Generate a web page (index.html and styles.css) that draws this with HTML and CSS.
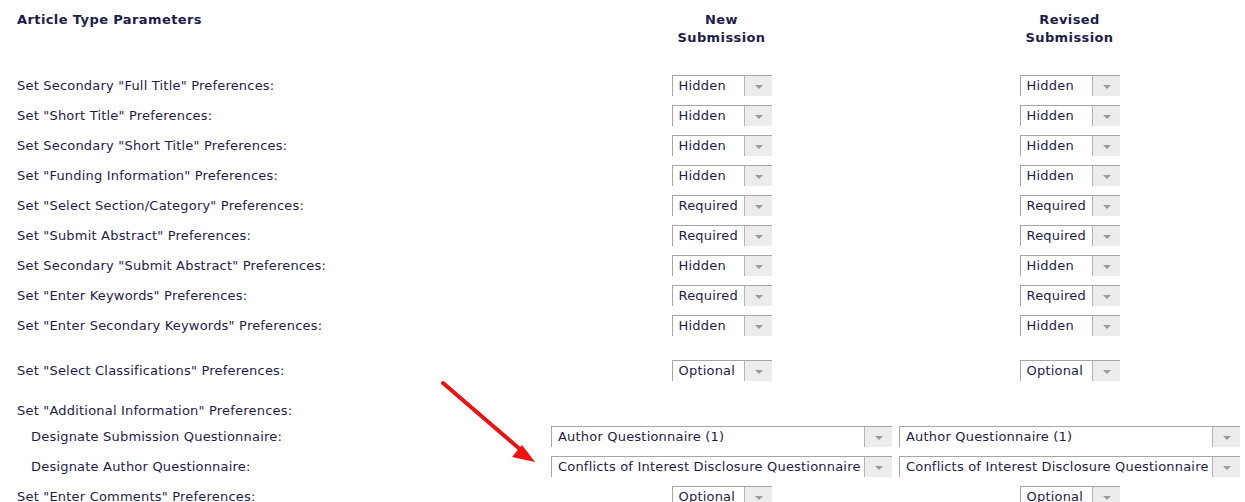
FILE: index.html
```html
<!DOCTYPE html>
<html>
<head>
<meta charset="utf-8">
<link rel="stylesheet" href="styles.css">
</head>
<body>
<div class="page">
  <div class="head">
    <div class="title">Article Type Parameters</div>
    <div class="colhead">New<br>Submission</div>
    <div class="colhead">Revised<br>Submission</div>
  </div>

  <div class="row">
    <div class="label">Set Secondary "Full Title" Preferences:</div>
    <div class="cell"><div class="sel"><span class="val">Hidden</span><span class="btn"></span></div></div>
    <div class="cell"><div class="sel"><span class="val">Hidden</span><span class="btn"></span></div></div>
  </div>
  <div class="row">
    <div class="label">Set "Short Title" Preferences:</div>
    <div class="cell"><div class="sel"><span class="val">Hidden</span><span class="btn"></span></div></div>
    <div class="cell"><div class="sel"><span class="val">Hidden</span><span class="btn"></span></div></div>
  </div>
  <div class="row">
    <div class="label">Set Secondary "Short Title" Preferences:</div>
    <div class="cell"><div class="sel"><span class="val">Hidden</span><span class="btn"></span></div></div>
    <div class="cell"><div class="sel"><span class="val">Hidden</span><span class="btn"></span></div></div>
  </div>
  <div class="row">
    <div class="label">Set "Funding Information" Preferences:</div>
    <div class="cell"><div class="sel"><span class="val">Hidden</span><span class="btn"></span></div></div>
    <div class="cell"><div class="sel"><span class="val">Hidden</span><span class="btn"></span></div></div>
  </div>
  <div class="row">
    <div class="label">Set "Select Section/Category" Preferences:</div>
    <div class="cell"><div class="sel"><span class="val">Required</span><span class="btn"></span></div></div>
    <div class="cell"><div class="sel"><span class="val">Required</span><span class="btn"></span></div></div>
  </div>
  <div class="row">
    <div class="label">Set "Submit Abstract" Preferences:</div>
    <div class="cell"><div class="sel"><span class="val">Required</span><span class="btn"></span></div></div>
    <div class="cell"><div class="sel"><span class="val">Required</span><span class="btn"></span></div></div>
  </div>
  <div class="row">
    <div class="label">Set Secondary "Submit Abstract" Preferences:</div>
    <div class="cell"><div class="sel"><span class="val">Hidden</span><span class="btn"></span></div></div>
    <div class="cell"><div class="sel"><span class="val">Hidden</span><span class="btn"></span></div></div>
  </div>
  <div class="row">
    <div class="label">Set "Enter Keywords" Preferences:</div>
    <div class="cell"><div class="sel"><span class="val">Required</span><span class="btn"></span></div></div>
    <div class="cell"><div class="sel"><span class="val">Required</span><span class="btn"></span></div></div>
  </div>
  <div class="row">
    <div class="label">Set "Enter Secondary Keywords" Preferences:</div>
    <div class="cell"><div class="sel"><span class="val">Hidden</span><span class="btn"></span></div></div>
    <div class="cell"><div class="sel"><span class="val">Hidden</span><span class="btn"></span></div></div>
  </div>
  <div class="row gap">
    <div class="label">Set "Select Classifications" Preferences:</div>
    <div class="cell"><div class="sel"><span class="val">Optional</span><span class="btn"></span></div></div>
    <div class="cell"><div class="sel"><span class="val">Optional</span><span class="btn"></span></div></div>
  </div>
  <div class="row short">
    <div class="label">Set "Additional Information" Preferences:</div>
  </div>
  <div class="row">
    <div class="label sub">Designate Submission Questionnaire:</div>
    <div class="cell"><div class="sel wide"><span class="val">Author Questionnaire (1)</span><span class="btn"></span></div></div>
    <div class="cell"><div class="sel wide"><span class="val">Author Questionnaire (1)</span><span class="btn"></span></div></div>
  </div>
  <div class="row">
    <div class="label sub">Designate Author Questionnaire:</div>
    <div class="cell"><div class="sel wide"><span class="val">Conflicts of Interest Disclosure Questionnaire</span><span class="btn"></span></div></div>
    <div class="cell"><div class="sel wide"><span class="val">Conflicts of Interest Disclosure Questionnaire</span><span class="btn"></span></div></div>
  </div>
  <div class="row">
    <div class="label">Set "Enter Comments" Preferences:</div>
    <div class="cell"><div class="sel"><span class="val">Optional</span><span class="btn"></span></div></div>
    <div class="cell"><div class="sel"><span class="val">Optional</span><span class="btn"></span></div></div>
  </div>

  <svg class="arrow" width="110" height="100" viewBox="0 0 110 100">
    <line x1="3" y1="3" x2="82" y2="71" stroke="#f01010" stroke-width="4" stroke-linecap="round"/>
    <polygon points="95,82 72,77 82,65" fill="#f01010"/>
  </svg>
</div>
</body>
</html>
```

FILE: styles.css
```css
html, body {
  margin: 0;
  padding: 0;
  background: #ffffff;
}

.page {
  position: relative;
  padding: 11px 0 0 17px;
  font-family: "DejaVu Sans", Verdana, sans-serif;
  font-size: 13px;
  letter-spacing: 0.2px;
  color: #1d1d4b;
  width: 1228px;
  height: 491px;
  overflow: hidden;
}

.head {
  display: grid;
  grid-template-columns: 527px 341px 341px;
  column-gap: 7px;
  height: 59px;
  line-height: 18px;
  font-weight: bold;
  letter-spacing: 0.4px;
}

.colhead {
  text-align: center;
}

.row {
  display: grid;
  grid-template-columns: 527px 341px 341px;
  column-gap: 7px;
  align-items: center;
  height: 30px;
}

.row.gap {
  margin-top: 15px;
}

.row.short {
  margin-top: 14px;
  height: 22px;
}

.label.sub {
  padding-left: 14px;
}

.cell {
  display: flex;
  justify-content: center;
}

.sel {
  display: flex;
  width: 100px;
  height: 21px;
  box-sizing: border-box;
  border-top: 1px solid #a6a6a6;
  border-left: 1px solid #a6a6a6;
  margin-top: 0;
}

.sel.wide {
  width: 341px;
}

.val {
  flex: 1;
  padding: 1px 0 0 6px;
  line-height: 17px;
  white-space: nowrap;
  overflow: hidden;
  color: #1d1d4b;
}

.btn {
  width: 27px;
  flex: none;
  background: #ececec;
  border-left: 1px solid #b4b4b4;
  position: relative;
}

.btn::after {
  content: "";
  position: absolute;
  left: 10px;
  top: 9px;
  border-left: 4px solid transparent;
  border-right: 4px solid transparent;
  border-top: 4px solid #9a9a9a;
}

.arrow {
  position: absolute;
  left: 440px;
  top: 380px;
}
```
